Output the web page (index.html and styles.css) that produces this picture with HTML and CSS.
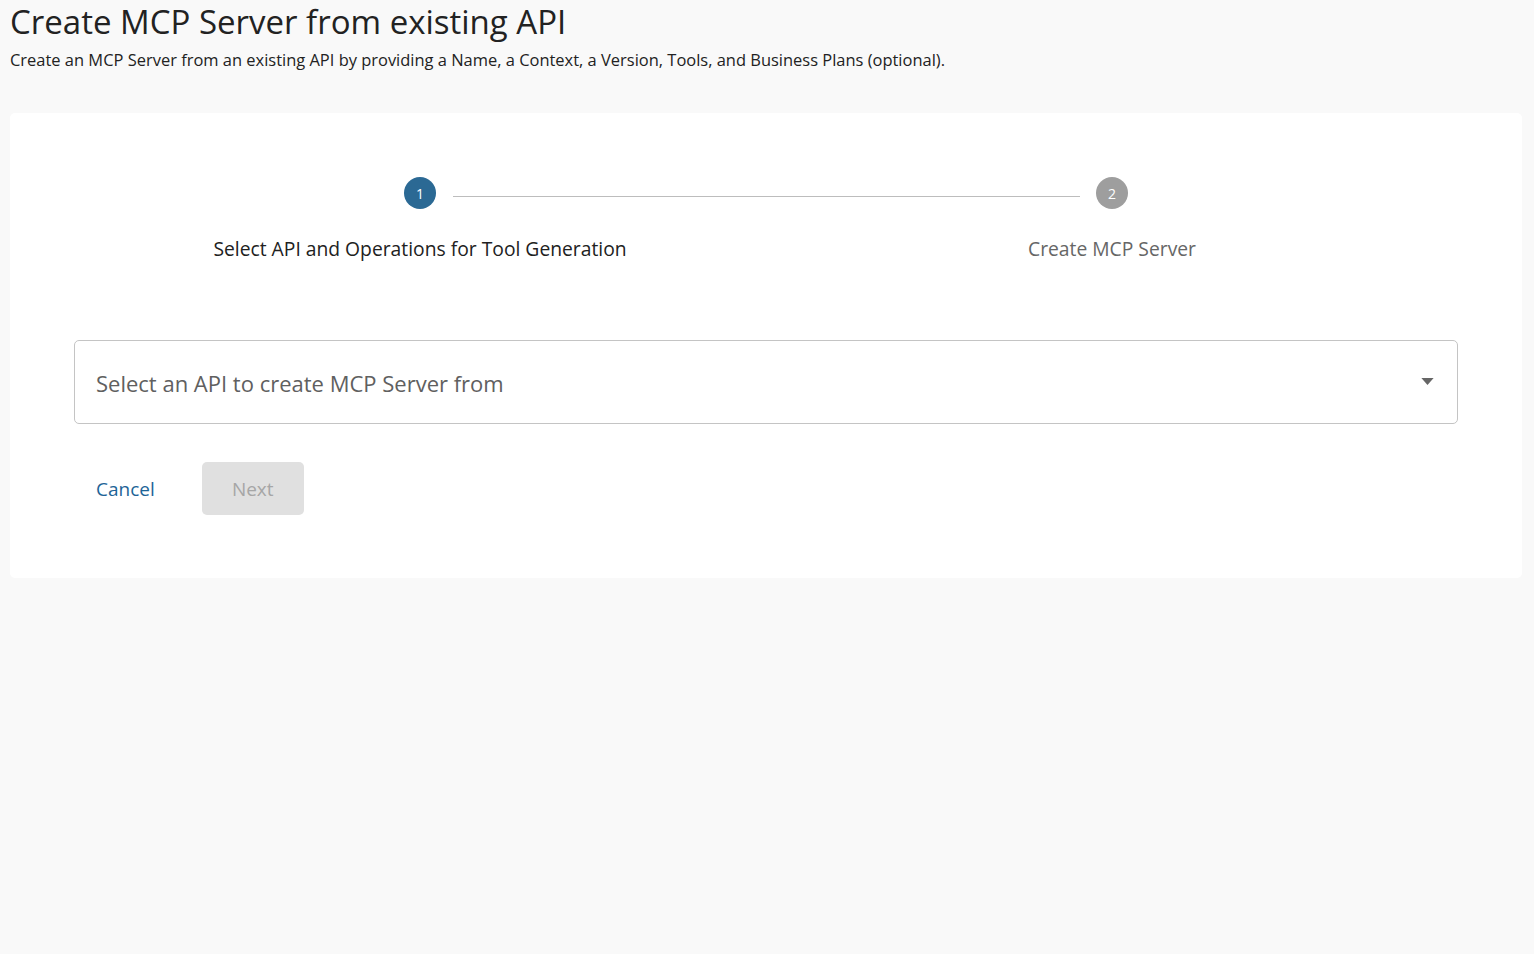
FILE: index.html
```html
<!DOCTYPE html>
<html lang="en">
<head>
<meta charset="utf-8">
<title>Create MCP Server from existing API</title>
<link rel="stylesheet" href="styles.css">
</head>
<body>
<main class="page">
  <header class="page-header">
    <h1 class="title">Create MCP Server from existing API</h1>
    <p class="subtitle">Create an MCP Server from an existing API by providing a Name, a Context, a Version, Tools, and Business Plans (optional).</p>
  </header>
  <section class="card">
    <div class="stepper">
      <div class="step">
        <div class="step-icon active">1</div>
        <div class="step-label active">Select API and Operations for Tool Generation</div>
      </div>
      <div class="step">
        <div class="connector"></div>
        <div class="step-icon">2</div>
        <div class="step-label">Create MCP Server</div>
      </div>
    </div>
    <div class="select">
      <span class="select-placeholder">Select an API to create MCP Server from</span>
      <svg class="select-arrow" viewBox="0 0 14 8" width="13" height="7"><path d="M0 0h14L7 8z"/></svg>
    </div>
    <div class="actions">
      <button class="btn btn-text">Cancel</button>
      <button class="btn btn-disabled" disabled>Next</button>
    </div>
  </section>
</main>
</body>
</html>
```
FILE: styles.css
```css
* { box-sizing: border-box; }
html, body { margin: 0; padding: 0; }
body {
  background: #f9f9f9;
  font-family: "Open Sans", "Noto Sans", sans-serif;
  color: #212121;
}
.page { padding: 0 12px 0 10px; }
.page-header { padding-top: 1px; }
.title {
  margin: 0;
  font-size: 33px;
  font-weight: 400;
  line-height: 41px;
  color: #222;
}
.subtitle {
  margin: 0;
  font-size: 16.47px;
  line-height: 36px;
  color: #222;
}
.card {
  margin-top: 35px;
  background: #fff;
  border-radius: 5px;
  padding: 64px 64px 63px;
}
.stepper { display: flex; }
.step {
  flex: 1;
  position: relative;
  display: flex;
  flex-direction: column;
  align-items: center;
}
.connector {
  position: absolute;
  top: 19px;
  left: calc(-50% + 33px);
  right: calc(50% + 32px);
  border-top: 1px solid #bdbdbd;
}
.step-icon {
  width: 32px;
  height: 32px;
  border-radius: 50%;
  background: #9e9e9e;
  color: #fff;
  font-size: 14px;
  display: flex;
  align-items: center;
  justify-content: center;
}
.step-icon.active { background: #2b6994; }
.step-label {
  margin-top: 28px;
  font-size: 19.3px;
  line-height: 24px;
  color: #666;
}
.step-label.active { color: #212121; }
.select {
  margin-top: 79px;
  height: 84px;
  border: 1px solid #c4c4c4;
  border-radius: 5px;
  display: flex;
  align-items: center;
  justify-content: space-between;
  padding: 0 23px 0 21px;
}
.select-placeholder {
  font-size: 22px;
  color: #606060;
  margin-top: 2px;
}
.select-arrow { fill: #666; margin-top: -1px; }
.actions {
  margin-top: 38px;
  display: flex;
  align-items: center;
  gap: 25px;
}
.btn {
  font-family: inherit;
  font-size: 19px;
  border: none;
  border-radius: 5px;
  height: 53px;
  padding: 0 22px;
  background: none;
}
.btn-text { color: #1d6497; }
.btn-disabled {
  background: #e0e0e0;
  color: #a6a6a6;
  padding: 0 30px;
  width: 102px;
}
```
